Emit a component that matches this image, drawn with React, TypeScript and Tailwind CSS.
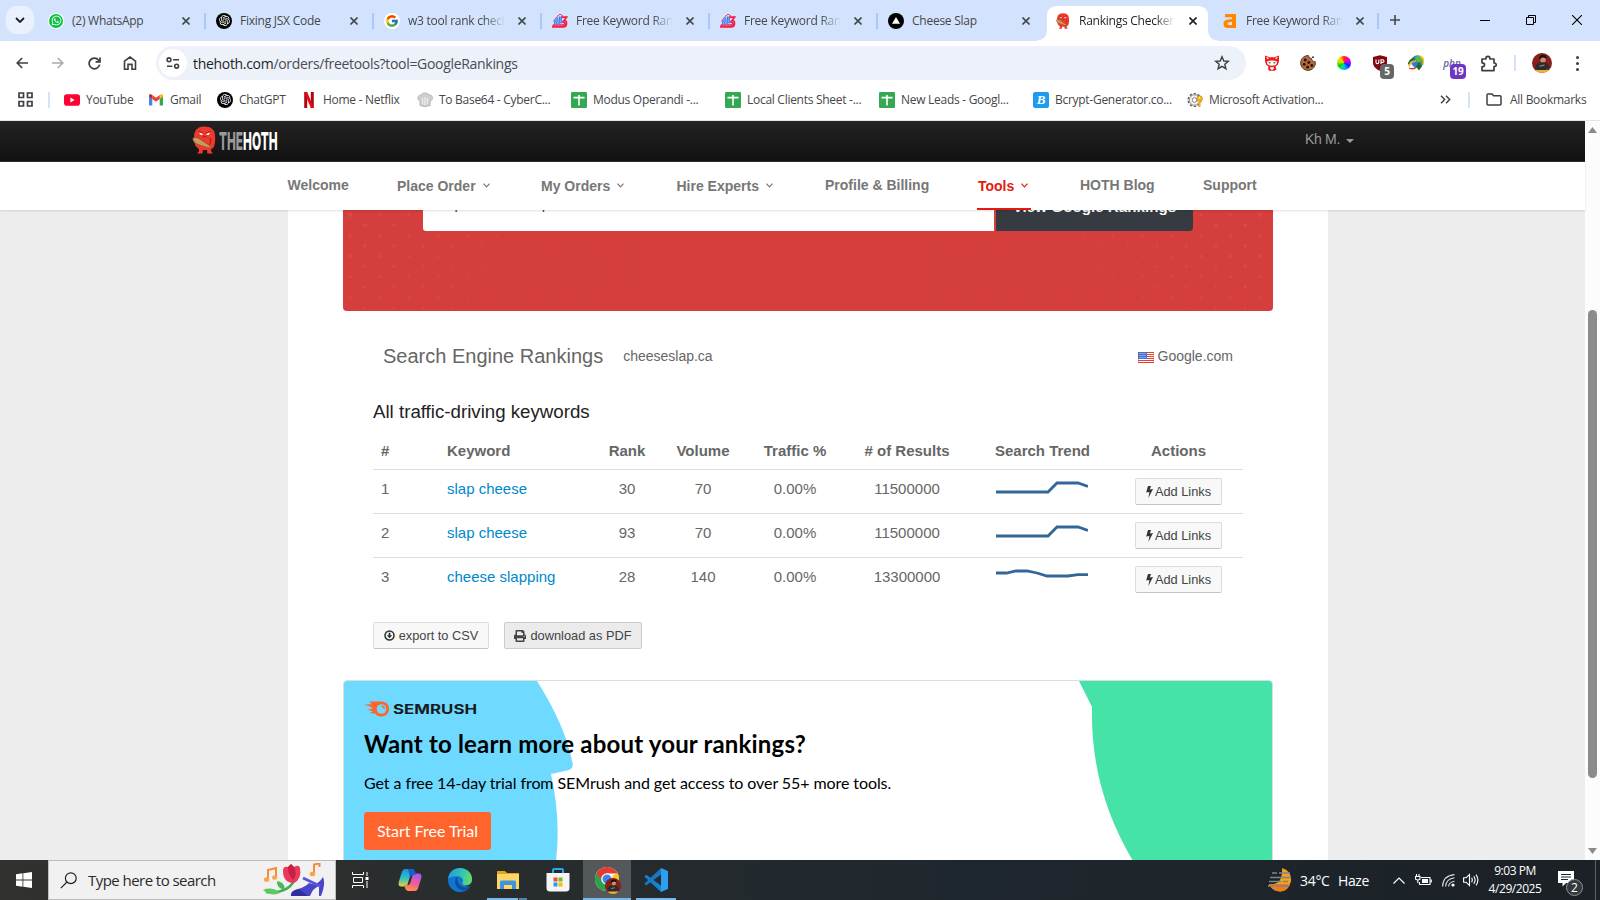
import React from "react";
import { FaWhatsapp, FaPrint } from "react-icons/fa";
import { FcGoogle } from "react-icons/fc";
import { RiOpenaiFill } from "react-icons/ri";

const UI = "font-['Open_Sans','Noto_Sans',sans-serif]";
const ARIAL = "font-['Liberation_Sans',Arial,sans-serif]";

/* ---------- favicons ---------- */

const WhatsAppIcon = () => (
  <span className="flex size-4 items-center justify-center rounded-full bg-white">
    <span className="flex size-[14px] items-center justify-center rounded-full bg-[#0cc143] text-white">
      <FaWhatsapp size={11} />
    </span>
  </span>
);

const OpenAIIcon = () => (
  <span className="flex size-4 items-center justify-center rounded-full bg-black text-white">
    <RiOpenaiFill size={13} />
  </span>
);

const GoogleIcon = () => (
  <span className="flex size-4 items-center justify-center rounded-full bg-white">
    <FcGoogle size={14} />
  </span>
);

const W3Icon = () => (
  <svg viewBox="0 0 16 16" className="size-4">
    <path d="M1.5 8.5L5 3.5L8 1.2L11 3" stroke="#ef2b4a" strokeWidth="0.9" fill="none" />
    <path d="M3.2 6.5L2.8 11M5.4 4.5L4.8 11M7.6 3.5L7 11M9.4 3.5L9 10.5" stroke="#3b7ff0" strokeWidth="1.5" />
    <path d="M9.2 4.2H14.6L12 7.4C15.4 7.6 15.4 13.8 11.5 13.8H0.8L1.6 12H11.6C13.2 12 13.2 9 11 9H9.6" fill="none" stroke="#f0204c" strokeWidth="1.7" />
  </svg>
);

const VercelIcon = () => (
  <svg viewBox="0 0 16 16" className="size-4">
    <circle cx="8" cy="8" r="8" fill="#000" />
    <path d="M8 4L12 10.8H4z" fill="#fff" />
  </svg>
);

const Monster = ({ className }: { className: string }) => (
  <svg viewBox="0 0 24 28" className={className}>
    <path d="M12 0.5C18.5 0.5 22 3.5 22.5 9C23 15 22.5 18.5 21 21.5L18.5 23.5L18.8 25.5L20.5 27.5H14.8L14.6 24H10.4L10 27.5H4.5L6.5 25.5L6.3 23L3 20C1.2 16 1.2 11 1.8 8C3 3 6 0.5 12 0.5z" fill="#ee3a2c" />
    <path d="M6.8 6.2L10.6 7.8Q10.4 9.2 8.6 9Q6.9 8.6 6.8 6.2zM17.4 6.2L13.6 7.8Q13.8 9.2 15.6 9Q17.3 8.6 17.4 6.2z" fill="#fff" />
    <path d="M6 5.4L10.9 7.4M18.2 5.4L13.3 7.4M10 11.2Q12 9.8 14 11.2M17.5 12Q19.5 15 17 18.5" stroke="#8a1a12" strokeWidth="0.9" fill="none" />
    <path d="M0.6 12C2.5 10.6 5.5 11.8 8 13.5L18.5 20.5L18 22C13 21 6 19 3 17.2C0.8 15.5 -0.4 13 0.6 12z" fill="#c99a5f" stroke="#7a4a20" strokeWidth="0.6" />
  </svg>
);

const AhrefsIcon = () => (
  <svg viewBox="0 0 16 16" className="size-4">
    <path d="M3 1H14V15H5.5C2.8 15 1.5 13.4 1.5 11C1.5 7.8 3.5 6.8 6 6.5L10 6V4.3H3zM10 8.8L7 9.2C5.2 9.4 5 11.9 7 11.9H10z" fill="#ff8800" fillRule="evenodd" />
  </svg>
);

const YouTubeIcon = () => (
  <svg viewBox="0 0 16 16" className="size-4">
    <rect x="0" y="2.3" width="16" height="11.4" rx="2.8" fill="#ff0033" />
    <path d="M6.4 5.6L10.6 8L6.4 10.4z" fill="#fff" />
  </svg>
);

const GmailIcon = () => (
  <svg viewBox="0 0 16 16" className="size-4">
    <path d="M1 4V13.5H4.3V6.8z" fill="#4285f4" />
    <path d="M15 4V13.5H11.7V6.8z" fill="#34a853" />
    <path d="M1 4.5V3.6C1 2 3 1.8 4.3 3L4.3 7z" fill="#c5221f" />
    <path d="M15 4.5V3.6C15 2 13 1.8 11.7 3L11.7 7z" fill="#fbbc04" />
    <path d="M4.3 3V7L8 9.8L11.7 7V3L8 5.8z" fill="#ea4335" />
  </svg>
);

const NetflixIcon = () => (
  <svg viewBox="0 0 16 16" className="size-4">
    <path d="M3.2 0H6.2V16L3.2 16z" fill="#b1060f" />
    <path d="M9.8 0H12.8V16H9.8z" fill="#b1060f" />
    <path d="M3.2 0H6.2L12.8 16H9.8z" fill="#e50914" />
  </svg>
);

const ChefIcon = () => (
  <svg viewBox="0 0 16 16" className="size-4">
    <path d="M3 13.5V9C-0.5 7.5 0.5 2.8 3.8 3.2C5 0.3 10.5 0.2 11.8 2.8C16 2.5 16.8 7.8 13.2 9V13.5Q8 15.8 3 13.5z" fill="#cfcfcf" stroke="#a5a5a5" strokeWidth="0.7" />
    <path d="M5.5 6V12M8 5V13M10.5 6V12" stroke="#ededed" strokeWidth="1.2" />
  </svg>
);

const SheetIcon = () => (
  <svg viewBox="0 0 16 16" className="size-4">
    <rect width="16" height="16" rx="1.2" fill="#34a853" />
    <path d="M2.5 5.6H13.5M8 3V13.5" stroke="#fff" strokeWidth="1.6" />
  </svg>
);

const BcryptIcon = () => (
  <span className="flex size-4 items-center justify-center rounded-[2px] bg-[#1d9bf0] font-['Liberation_Serif',serif] text-[13px] leading-none font-bold text-white italic">
    B
  </span>
);

const GearKeyIcon = () => (
  <svg viewBox="0 0 16 16" className="size-4">
    <circle cx="7.5" cy="8" r="6.3" fill="#fff" stroke="#666" strokeWidth="1.6" strokeDasharray="2.4 1.6" />
    <circle cx="7.5" cy="8" r="5.2" fill="#f3f3f3" stroke="#777" strokeWidth="0.8" />
    <circle cx="7.5" cy="8" r="2.3" fill="#fff" stroke="#777" strokeWidth="0.9" />
    <circle cx="12.6" cy="6.6" r="2.9" fill="#f2b01e" stroke="#b97d0b" strokeWidth="0.5" />
    <path d="M11.6 9H13.6V14.5L12.6 15.6L11.6 14.5z" fill="#f2b01e" />
    <circle cx="12.6" cy="5.8" r="0.8" fill="#fff" />
  </svg>
);

const CloseX = ({ dark = false }: { dark?: boolean }) => (
  <svg viewBox="0 0 8 8" className="size-[8px] shrink-0">
    <path d="M0.5 0.5L7.5 7.5M7.5 0.5L0.5 7.5" stroke={dark ? "#1f1f1f" : "#45474a"} strokeWidth="1.6" />
  </svg>
);

/* ---------- tab strip ---------- */

type Tab = { icon: React.ReactNode; title: string; active?: boolean; sep?: boolean; fade?: boolean; narrow?: boolean };

const tabs: Tab[] = [
  { icon: <WhatsAppIcon />, title: "(2) WhatsApp", sep: true },
  { icon: <OpenAIIcon />, title: "Fixing JSX Code", sep: true },
  { icon: <GoogleIcon />, title: "w3 tool rank checker", sep: true, fade: true },
  { icon: <W3Icon />, title: "Free Keyword Rank", sep: true, fade: true },
  { icon: <W3Icon />, title: "Free Keyword Rank", sep: true, fade: true },
  { icon: <VercelIcon />, title: "Cheese Slap", narrow: true },
  { icon: <Monster className="size-4" />, title: "Rankings Checker", active: true, fade: true, narrow: true },
  { icon: <AhrefsIcon />, title: "Free Keyword Rank", sep: true, fade: true, narrow: true },
];

const TabStrip = () => (
  <div className="flex h-[41px] w-full items-start bg-[#d3e3fd]">
    <div className="mt-[6px] ml-[6px] flex size-7 items-center justify-center rounded-[10px] bg-[#e9f0fe]">
      <svg viewBox="0 0 10 6" className="h-[6px] w-[10px]">
        <path d="M1 1L5 5L9 1" stroke="#1f1f1f" strokeWidth="1.8" fill="none" />
      </svg>
    </div>
    <div className="ml-[4px] flex h-full">
      {tabs.map((t, i) => (
        <div key={i} className={"relative flex h-full items-center " + (t.narrow ? "w-[167px]" : "w-[168px]")}>
          {t.active && (
            <svg viewBox="0 0 182 35" className="absolute bottom-0 -left-[8px] h-[35px] w-[182px]">
              <path d="M0 35V34.5Q9 34 10 25V10Q10 0 20 0H161Q171 0 171 10V25Q172 34 181 34.5V35z" fill="#fff" />
            </svg>
          )}
          <div className="relative flex h-10 w-full items-center pl-[10px]">
            <span className="w-4 shrink-0">{t.icon}</span>
            <span
              className={
                "ml-2 w-[97px] overflow-hidden text-[12px] tracking-[-0.25px] whitespace-nowrap " +
                (t.active ? "text-[#1f1f1f] " : "text-[#45474a] ") +
                (t.fade ? "[mask-image:linear-gradient(to_right,#000_76px,transparent_97px)]" : "")
              }
            >
              {t.title}
            </span>
            <span className="ml-[13px]">
              <CloseX dark={t.active} />
            </span>
            <span className={"ml-auto h-4 w-[2px] " + (t.sep ? "bg-[#a8c7fa]" : "")} />
          </div>
        </div>
      ))}
    </div>
    <div className="flex h-10 flex-1 items-center pl-[10px]">
      <svg viewBox="0 0 12 12" className="size-[12px]">
        <path d="M6 1V11M1 6H11" stroke="#45474a" strokeWidth="1.6" />
      </svg>
      <div className="ml-auto flex h-full items-center text-black">
        <div className="flex w-[46px] justify-center">
          <svg viewBox="0 0 10 10" className="size-[10px]"><path d="M0 5.5H10" stroke="#000" /></svg>
        </div>
        <div className="flex w-[46px] justify-center">
          <svg viewBox="0 0 10 10" className="size-[10px]" fill="none" stroke="#000">
            <path d="M0.5 2.5H7.5V9.5H0.5zM2.5 2.5V0.5H9.5V7.5H7.5" />
          </svg>
        </div>
        <div className="flex w-[46px] justify-center">
          <svg viewBox="0 0 10 10" className="size-[10px]"><path d="M0 0L10 10M10 0L0 10" stroke="#000" strokeWidth="1.1" /></svg>
        </div>
      </div>
    </div>
  </div>
);

/* ---------- toolbar ---------- */

const Extensions = () => (
  <>
    <span className="flex w-9 justify-center">
      <svg viewBox="0 0 16 16" className="size-4">
        <path d="M1 0.5L5.5 2.2H10.5L15 0.5V6L14 9.5L11.5 11.5L12.5 14.5L10.5 15.8H5L4 14L4.5 11.5L2 9.5L1 6z" fill="#ee1c1c" />
        <path d="M3 6.5Q8 4.5 13 6.5V8Q12 10.8 8 10.8T3 8z" fill="#fff" />
        <path d="M2.6 2.4L4.4 3.8M13.4 2.4L11.6 3.8" stroke="#fff" strokeWidth="1.2" />
        <path d="M4.6 7.8H6.6M9.4 7.8H11.4" stroke="#333" strokeWidth="1" />
        <path d="M6 12.2H10V13.8H9V14.8H7V13.8H6z" fill="#fff" />
      </svg>
    </span>
    <span className="flex w-9 justify-center">
      <svg viewBox="0 0 16 16" className="size-4">
        <path d="M8.5 0.6C9 3 10.5 3.2 11.5 3.4C11.6 5.5 13 6.4 15.4 6.8C16 11.5 12.5 15.4 8 15.4C3.8 15.4 0.6 12 0.6 8C0.6 3.6 4.4 0.2 8.5 0.6z" fill="#b06a40" stroke="#4a2614" strokeWidth="0.8" />
        <g fill="#2c140b">
          <circle cx="5.2" cy="5" r="1.4" /><circle cx="4.2" cy="9.3" r="1.4" /><circle cx="8.8" cy="7.5" r="1.4" />
          <circle cx="7.6" cy="12.2" r="1.4" /><circle cx="11.8" cy="10.5" r="1.4" /><circle cx="13" cy="2.2" r="0.9" />
        </g>
      </svg>
    </span>
    <span className="flex w-9 justify-center">
      <span className="size-[14px] rounded-full bg-[conic-gradient(#ff2a00,#ff00a8,#b000ff,#0030ff,#00a0ff,#00e0a0,#10d000,#b8e800,#ffd000,#ff2a00)]" />
    </span>
    <span className="relative flex w-9 justify-center">
      <svg viewBox="0 0 16 16" className="size-4">
        <path d="M8 0.3L15 2V7.5C15 11.5 12 14.3 8 15.8C4 14.3 1 11.5 1 7.5V2z" fill="#800610" />
        <path d="M4 4.5V7.2Q4 8.6 5.4 8.6T6.8 7.2V4.5M9 9V4.8H10.6Q12 5 12 6.2T10.6 7.4H9" stroke="#fff" strokeWidth="1.1" fill="none" />
      </svg>
      <span className="absolute top-[9px] left-[18px] flex h-[15px] w-[14px] items-center justify-center rounded-[4px] bg-[#666] text-[10px] font-bold text-white">5</span>
    </span>
    <span className="flex w-9 justify-center">
      <svg viewBox="0 0 16 16" className="size-4">
        <circle cx="9.4" cy="6.6" r="6.3" fill="#2d7fd6" />
        <path d="M7 2.5Q9 0 12 1L14.5 4L12.5 9L9 7z" fill="#5fb83a" />
        <path d="M12.4 0.9Q17 4 14.8 9.5" stroke="#f2c81e" strokeWidth="1.8" fill="none" />
        <path d="M0.5 9.5Q2 4 6.5 3.6" stroke="#1c6c2c" strokeWidth="1.8" fill="none" />
        <path d="M0.8 11.4Q2.5 6.6 8 6" stroke="#f0b51c" strokeWidth="1.5" fill="none" />
        <path d="M1 13Q4 14.6 8 12.6" stroke="#d8351f" strokeWidth="1.4" fill="none" />
        <path d="M9.5 7.5V10.5H7.5L11 15.5L14.5 10.5H12.5V7.5z" fill="#1d6a22" />
      </svg>
    </span>
    <span className="relative flex w-9 justify-center">
      <span className="text-[10px] leading-4 font-semibold text-[#5c679c] italic">php</span>
      <span className="absolute top-[9px] left-[16px] flex h-[15px] w-4 items-center justify-center rounded-[4px] bg-[#6c35c2] text-[10px] font-bold tracking-tight text-white">19</span>
    </span>
    <span className="flex w-9 justify-center">
      <svg viewBox="0 0 17 17" className="size-[17px]">
        <path d="M2 4H5.8C5.8 0.6 10 0.6 10 4H14V8C17 8 17 11.6 14 11.6V15.6H2V11.8C5.4 11.8 5.4 7.8 2 7.8z" fill="none" stroke="#3c3f43" strokeWidth="1.7" strokeLinejoin="round" />
      </svg>
    </span>
  </>
);

const Avatar = ({ className }: { className: string }) => (
  <svg viewBox="0 0 20 20" className={className}>
    <defs><clipPath id="av"><circle cx="10" cy="10" r="10" /></clipPath></defs>
    <g clipPath="url(#av)">
      <rect width="20" height="20" fill="#8a1f1a" />
      <path d="M1 18Q10 14 19 18L14 20H6z" fill="#e8b52c" />
      <path d="M3 16Q3 9.5 9.5 9.2Q16.5 9 17.5 14.5L14 17H6z" fill="#2a2c33" />
      <circle cx="11" cy="6.4" r="2.9" fill="#c98f74" />
      <path d="M7 5.6Q7.4 1.6 11.4 1.8Q15 2 14.4 6Q12.5 4 10.5 4.6Q8.5 4.8 8 7z" fill="#18110f" />
      <path d="M7.5 13.2L12.5 12.2" stroke="#a87863" strokeWidth="1.2" />
    </g>
  </svg>
);

const Toolbar = () => (
  <div className="flex h-[44px] items-center bg-white">
    <div className="flex w-[156px] items-center pl-1 text-[#45474a]">
      <span className="flex w-9 justify-center">
        <svg viewBox="0 0 12 12" className="size-[12px]" fill="none" stroke="#3c3f43" strokeWidth="1.6"><path d="M12 6H1.5M6.2 1L1.2 6L6.2 11" /></svg>
      </span>
      <span className="flex w-9 justify-center">
        <svg viewBox="0 0 12 12" className="size-[12px]" fill="none" stroke="#a9abae" strokeWidth="1.6"><path d="M0 6H10.5M5.8 1L10.8 6L5.8 11" /></svg>
      </span>
      <span className="flex w-9 justify-center">
        <svg viewBox="0 0 13 13" className="size-[13px]" fill="none" stroke="#3c3f43" strokeWidth="1.7"><path d="M11.6 7.6A5.3 5.3 0 1 1 10.6 3.2L11.6 4.4M12 0.5V4.9H7.6" /></svg>
      </span>
      <span className="flex w-9 justify-center">
        <svg viewBox="0 0 14 14" className="size-[14px]" fill="none" stroke="#3c3f43" strokeWidth="1.6"><path d="M1.5 5.2L7 1L12.5 5.2V13.2H9V8.4H5V13.2H1.5z" /></svg>
      </span>
    </div>
    <div className="flex h-[34px] w-[1090px] items-center rounded-full bg-[#edf1fa] px-[3px]">
      <span className="flex size-7 items-center justify-center rounded-full bg-white">
        <svg viewBox="0 0 14 12" className="h-[12px] w-[14px]" fill="none" stroke="#3c3f43" strokeWidth="1.6">
          <circle cx="3" cy="2.8" r="1.9" /><path d="M7 2.8H13M1 9.2H6.4" /><circle cx="10.6" cy="9.2" r="1.9" />
        </svg>
      </span>
      <span className="ml-[6px] text-[14px] tracking-[-0.31px] whitespace-nowrap text-[#4a4c50]">
        <span className="text-[#1f1f1f]">thehoth.com</span>/orders/freetools?tool=GoogleRankings
      </span>
      <svg viewBox="0 0 16 16" className="mr-[13px] ml-auto size-4" fill="none" stroke="#3c3f43" strokeWidth="1.4">
        <path d="M8 1.8L9.8 6L14.3 6.3L10.8 9.2L11.9 13.7L8 11.3L4.1 13.7L5.2 9.2L1.7 6.3L6.2 6z" />
      </svg>
    </div>
    <div className="ml-2 flex items-center">
      <Extensions />
    </div>
    <span className="ml-[8px] h-4 w-[2px] bg-[#d3e3fd]" />
    <Avatar className="ml-[16px] size-5" />
    <span className="ml-[24px] flex flex-col gap-[3px]">
      <i className="size-[3px] rounded-full bg-[#3c3f43]" />
      <i className="size-[3px] rounded-full bg-[#3c3f43]" />
      <i className="size-[3px] rounded-full bg-[#3c3f43]" />
    </span>
  </div>
);

/* ---------- bookmarks ---------- */

const Bookmark = ({ icon, label, className }: { icon: React.ReactNode; label: string; className: string }) => (
  <span className={"flex shrink-0 items-center gap-[6px] whitespace-nowrap " + className}>
    <span className="w-4 shrink-0">{icon}</span>
    <span>{label}</span>
  </span>
);

const Bookmarks = () => (
  <div className="flex h-[36px] items-center border-b border-[#dfe8e2] bg-white pb-[6px] pl-[18px] text-[12px] tracking-[-0.28px] text-[#45474a]">
    <svg viewBox="0 0 15 15" className="size-[15px]" fill="none" stroke="#3c3f43" strokeWidth="1.7">
      <path d="M1 1H5.5V5.5H1zM9.5 1H14V5.5H9.5zM1 9.5H5.5V14H1zM9.5 9.5H14V14H9.5z" />
    </svg>
    <span className="mr-[14px] ml-[15px] h-4 w-[2px] bg-[#d3e3fd]" />
    <Bookmark icon={<YouTubeIcon />} label="YouTube" className="w-[84px]" />
    <Bookmark icon={<GmailIcon />} label="Gmail" className="w-[69px]" />
    <Bookmark icon={<OpenAIIcon />} label="ChatGPT" className="w-[84px]" />
    <Bookmark icon={<NetflixIcon />} label="Home - Netflix" className="w-[116px]" />
    <Bookmark icon={<ChefIcon />} label="To Base64 - CyberC..." className="w-[154px]" />
    <Bookmark icon={<SheetIcon />} label="Modus Operandi -..." className="w-[154px]" />
    <Bookmark icon={<SheetIcon />} label="Local Clients Sheet -..." className="w-[154px]" />
    <Bookmark icon={<SheetIcon />} label="New Leads - Googl..." className="w-[154px]" />
    <Bookmark icon={<BcryptIcon />} label="Bcrypt-Generator.co..." className="w-[154px]" />
    <Bookmark icon={<GearKeyIcon />} label="Microsoft Activation..." className="w-[253px]" />
    <svg viewBox="0 0 11 9" className="h-[9px] w-[11px]" fill="none" stroke="#3c3f43" strokeWidth="1.4">
      <path d="M1 0.8L4.7 4.5L1 8.2M6 0.8L9.7 4.5L6 8.2" />
    </svg>
    <span className="mr-[16px] ml-[17px] h-4 w-[2px] bg-[#d3e3fd]" />
    <svg viewBox="0 0 16 13" className="h-[13px] w-[16px]" fill="none" stroke="#3c3f43" strokeWidth="1.5">
      <path d="M1 2Q1 1 2 1H6L7.6 2.8H14Q15 2.8 15 3.8V11Q15 12 14 12H2Q1 12 1 11z" />
    </svg>
    <span className="ml-2 whitespace-nowrap">All Bookmarks</span>
  </div>
);

/* ---------- site ---------- */

const NavItem = ({ label, chevron, active, className }: { label: string; chevron?: boolean; active?: boolean; className: string }) => (
  <div className={"shrink-0 " + className}>
    <span
      className={
        "inline-flex h-[48px] items-center whitespace-nowrap " +
        (active ? "border-b-2 border-[#e5190f] pt-[3px] pl-px text-[#e5190f]" : chevron ? "pt-[1px] text-[#777]" : "pb-[1px] text-[#777]")
      }
    >
      {label}
      {chevron && (
        <svg viewBox="0 0 7 5" className="mr-[3px] mb-[2px] ml-[7px] h-[5px] w-[7px]" fill="none" stroke="currentColor" strokeWidth="1.2">
          <path d="M0.5 0.6L3.5 3.8L6.5 0.6" />
        </svg>
      )}
    </span>
  </div>
);

const SiteHeader = () => (
  <>
    <div className="flex h-[41px] items-center border-b border-[#2c2c2c] bg-gradient-to-b from-[#232323] to-[#111] pl-[192px]">
      <Monster className="mb-[2px] h-[28px] w-[25px]" />
      <svg viewBox="0 0 60 24" className="ml-[1px] h-6 w-[60px] font-['Inter',sans-serif]" fontWeight="800" fontSize="25">
        <text x="1" y="20.5" textLength="58.5" lengthAdjust="spacingAndGlyphs" fill="#fff">
          <tspan fill="#9a9a9a">THE</tspan>
          <tspan>HOTH</tspan>
        </text>
      </svg>
      <span className="ml-[1027px] flex items-center pb-1 text-[14px] tracking-[-0.3px] text-[#999]">
        Kh M.
        <svg viewBox="0 0 8 4" className="mt-[4px] ml-[6px] h-1 w-2"><path d="M0 0H8L4 4z" fill="#999" /></svg>
      </span>
    </div>
    <div className="relative z-10 flex h-[48px] bg-white pl-[287.5px] text-[14px] font-bold shadow-[0_1px_2px_rgba(0,0,0,0.12)]">
      <NavItem label="Welcome" className="w-[109.5px]" />
      <NavItem label="Place Order" chevron className="w-[144px]" />
      <NavItem label="My Orders" chevron className="w-[135.5px]" />
      <NavItem label="Hire Experts" chevron className="w-[148.5px]" />
      <NavItem label="Profile & Billing" className="w-[152px]" />
      <NavItem label="Tools" chevron active className="w-[103px]" />
      <NavItem label="HOTH Blog" className="w-[123px]" />
      <NavItem label="Support" className="w-[80px]" />
    </div>
  </>
);

const dotColumns = (from: number, to: number) => {
  const dots: { x: number; y: number; r: number; o: number }[] = [];
  for (let row = 0; row < 11; row++) {
    for (let x = 7 + (row % 2) * 14.7; x < 930; x += 29.35) {
      if (x < from || x > to) continue;
      const edge = from === 0 ? 1 - x / to : (x - from) / (930 - from);
      dots.push({ x, y: 5 + row * 10.3, r: 0.8 + edge * 1.4 * (1 - row / 14), o: 0.12 + edge * 0.25 });
    }
  }
  return dots;
};

const SearchBanner = () => (
  <div className="relative h-[101px] w-[930px] overflow-hidden rounded-b-[4px] bg-[#d43f3d]">
    <svg viewBox="0 0 930 101" className="absolute inset-0 h-[101px] w-[930px]">
      {[...dotColumns(0, 300), ...dotColumns(585, 930)].map((d, i) => (
        <circle key={i} cx={d.x} cy={d.y} r={d.r} fill="#e0604a" opacity={d.o} />
      ))}
    </svg>
    <div className="relative -mt-[29px] ml-[80px] flex h-[50px] gap-[2px]">
      <div className="flex w-[571px] items-center rounded-l-[3px] bg-white pb-[3px] pl-[15px] text-[14.8px] text-[#444]">
        http://cheeseslap.ca
      </div>
      <div className="flex w-[197px] items-center justify-center rounded-r-[4px] bg-[#363b42] pt-[3px] text-[15.2px] font-bold text-white">
        View Google Rankings
      </div>
    </div>
  </div>
);

const FlagUS = () => (
  <svg viewBox="0 0 16 11" className="h-[11px] w-[16px]">
    <rect width="16" height="11" fill="#fff" />
    <path d="M0 0.5H16M0 2.5H16M0 4.5H16M0 6.5H16M0 8.5H16M0 10.5H16" stroke="#ee3b33" />
    <rect width="9" height="7" fill="#3f6fe0" />
    <path d="M1.5 1.5H8M1.5 3.5H8M1.5 5.5H8" stroke="#cfdcfb" strokeWidth="0.9" strokeDasharray="1 1" />
    <rect x="0.5" y="0.5" width="15" height="10" fill="none" stroke="#a0522d" strokeOpacity="0.35" />
  </svg>
);

const RISE = "0,14 52,14 61,5 82,5 92,8.5";
const WAVE = "0,7 10.5,7 20,5 31,5 41,7 51,10 72,10 82,8.7 92,8.7";

const rows = [
  { n: 1, kw: "slap cheese", rank: 30, vol: 70, res: "11500000", trend: RISE },
  { n: 2, kw: "slap cheese", rank: 93, vol: 70, res: "11500000", trend: RISE },
  { n: 3, kw: "cheese slapping", rank: 28, vol: 140, res: "13300000", trend: WAVE },
];

const BTN = "flex h-[27px] items-center justify-center rounded-[2px] border border-[#dcdcdc] border-b-[#c4c4c4] text-[12.8px] whitespace-nowrap text-[#444]";
const GRID = "grid grid-cols-[66px_161px_54px_98px_86px_138px_138px_129px]";

const KeywordTable = () => (
  <div className="w-[870px] text-[15px] text-[#666]">
    <div className={GRID + " h-[38px] items-center border-b border-[#ddd] pt-[2px] text-center font-bold"}>
      <span className="pl-2 text-left">#</span>
      <span className="pl-2 text-left">Keyword</span>
      <span>Rank</span>
      <span>Volume</span>
      <span>Traffic %</span>
      <span>{"# of Results"}</span>
      <span className="pr-[5px]">Search Trend</span>
      <span>Actions</span>
    </div>
    {rows.map((r) => (
      <div key={r.n} className={GRID + " h-[44px] border-b border-[#ddd] pt-[8px] text-center leading-[22px] last:border-b-0"}>
        <span className="pl-2 text-left">{r.n}</span>
        <span className="pl-2 text-left text-[#0088cc]">{r.kw}</span>
        <span>{r.rank}</span>
        <span>{r.vol}</span>
        <span>0.00%</span>
        <span>{r.res}</span>
        <span className="pl-[20px]">
          <svg viewBox="0 0 92 20" className="h-5 w-[92px]">
            <polyline points={r.trend} fill="none" stroke="#336699" strokeWidth="2.8" />
          </svg>
        </span>
        <span className="flex justify-center">
          <span className={BTN + " w-[87px] bg-[#f8f8f8]"}>
            <svg viewBox="0 0 7 12" className="mr-[2px] h-[12px] w-[7px]">
              <path d="M2 0H5L3.8 3.6L7 2.9L2.4 12L3.4 5.9L0.2 6.6z" fill="#333" />
            </svg>
            Add Links
          </span>
        </span>
      </div>
    ))}
  </div>
);

const SemrushBanner = () => (
  <div className="relative h-[230px] w-[930px] overflow-hidden rounded-[4px] border border-[#ddd] bg-white font-['Lato',sans-serif] text-black">
    <svg viewBox="0 0 928 180" className="absolute top-0 left-0 h-[180px] w-[928px]">
      <path d="M0 0H193Q221 44 228.500 82Q230 88 223 89.500L207 93Q217 138 212 180H0z" fill="#6edaff" />
      <path d="M735 0L748 26Q746 108 789 180H928V0z" fill="#46e3a9" />
    </svg>
    <div className="relative pl-[20px]">
      <svg viewBox="0 0 114 16" className="mt-[20px] block h-4 w-[114px]">
        <path d="M5 0.5H17C23 0.5 25 4.5 25 8C25 12.5 21.5 15.5 17.5 15.5C14 15.5 12 14 11 12.5L5.5 12L9 10.6L3.5 8.4L8.5 8L6.5 5.5L0 3.6L8 3.2z" fill="#ff642d" />
        <circle cx="17.5" cy="8" r="4.8" fill="#6edaff" />
        <path d="M17.5 5.2A2.8 2.8 0 0 1 20.3 8" stroke="#ff642d" strokeWidth="1.3" fill="none" />
        <text x="29" y="13" fontSize="13" fontWeight="700" textLength="84" lengthAdjust="spacingAndGlyphs" fill="#171a22" className="font-['Inter',sans-serif]">SEMRUSH</text>
      </svg>
      <h2 className="mt-[13px] text-[24px] leading-[28px] font-bold tracking-[0.18px] whitespace-nowrap">
        Want to learn more about your rankings?
      </h2>
      <p className="mt-[14px] text-[16px] leading-[22px] tracking-[-0.08px] whitespace-nowrap">
        Get a free 14-day trial from SEMrush and get access to over 55+ more tools.
      </p>
      <span className="mt-[18px] flex h-[38px] w-[127px] items-center justify-center rounded-[3px] bg-[#ff642d] pb-px text-[16px] text-white">
        Start Free Trial
      </span>
    </div>
  </div>
);

const Page = () => (
  <div className="h-[650px] overflow-hidden bg-[#ededed]">
    <div className="ml-[288px] h-full w-[1040px] bg-white pl-[55px]">
      <SearchBanner />
      <div className="mt-[30px] flex h-[30px] w-[930px] items-center pr-[40px] pl-[40px] text-[#666]">
        <span className="text-[20px]">Search Engine Rankings</span>
        <span className="ml-[20px] text-[14px]">cheeseslap.ca</span>
        <span className="ml-auto flex items-center gap-1 text-[14px]">
          <span className="pt-[2px]"><FlagUS /></span>
          Google.com
        </span>
      </div>
      <div className="pl-[30px]">
        <h3 className="mt-[27px] text-[18.7px] leading-[28px] text-[#222]">All traffic-driving keywords</h3>
        <div className="mt-[6px]">
          <KeywordTable />
        </div>
        <div className="mt-[20px] flex gap-[15px]">
          <span className={BTN + " w-[116px] gap-[4px] bg-[#f8f8f8]"}>
            <svg viewBox="0 0 12 12" className="size-[11px]">
              <circle cx="6" cy="6" r="4.9" fill="none" stroke="#333" strokeWidth="1.7" />
              <path d="M5 3H7V5.8H9L6 9L3 5.8H5z" fill="#333" />
            </svg>
            export to CSV
          </span>
          <span className={BTN + " w-[138px] gap-[4px] !border-[#ccc] bg-[#ebebeb]"}>
            <FaPrint size={12} />
            download as PDF
          </span>
        </div>
      </div>
      <div className="mt-[31px]">
        <SemrushBanner />
      </div>
    </div>
  </div>
);

const Scrollbar = () => (
  <div className="flex w-[15px] flex-col items-center bg-[#fcfcfc]">
    <svg viewBox="0 0 9 6" className="mt-[6px] h-[6px] w-[9px]"><path d="M4.5 0L9 6H0z" fill="#8b8b8b" /></svg>
    <span className="mt-[177px] h-[468px] w-[9px] rounded-full bg-[#8b8b8b]" />
    <svg viewBox="0 0 9 6" className="mt-auto mb-[6px] h-[6px] w-[9px]"><path d="M0 0H9L4.5 6z" fill="#8b8b8b" /></svg>
  </div>
);

/* ---------- taskbar ---------- */

const SearchArt = () => (
  <svg viewBox="0 0 62 34" className="h-[34px] w-[62px]">
    <path d="M5 16V7L13 5V14" stroke="#f58c3c" strokeWidth="2" fill="none" />
    <ellipse cx="3.6" cy="16.5" rx="2.8" ry="2.3" fill="#f7a54e" /><ellipse cx="11.6" cy="14.5" rx="2.6" ry="2.2" fill="#f7a54e" />
    <path d="M51 11V1.5L56.5 0.5V4" stroke="#f58c3c" strokeWidth="2" fill="none" />
    <ellipse cx="49.5" cy="11" rx="2.8" ry="2.3" fill="#f7a54e" />
    <path d="M31 18Q24 31 3 29" stroke="#3fae4e" strokeWidth="2.6" fill="none" />
    <path d="M0 27Q9 23 17 30Q9 34 0 27z" fill="#5cc763" />
    <path d="M22 27Q13 25 14 18Q22 19 22 27z" fill="#4bb858" />
    <path d="M20 8Q20 3 25 4L28 1L31 4Q36 1 37 5Q39 16 31 20Q20 20 20 8z" fill="#ea3a5c" />
    <path d="M25 4Q25 12 30 17Q35 11 31 4L28 1z" fill="#c81f47" />
    <path d="M28 33Q27 28 35 26Q42 24 46 20Q54 24 60 14Q63 20 58 33H56V23Q50 25 47 33z" fill="#4a45c4" />
    <path d="M36 26L45 33H28Q27 28 36 26z" fill="#322f9c" />
    <path d="M40 15L57 23" stroke="#5a55d8" strokeWidth="2.5" />
  </svg>
);

const Taskbar = () => (
  <div className="flex h-[40px] items-stretch bg-gradient-to-r from-[#31322d] via-[#1f272e] via-60% to-[#1b2126] text-white">
    <div className="flex w-12 items-center justify-center">
      <svg viewBox="0 0 16 16" className="size-4" fill="#fff">
        <path d="M0 2.2L6.5 1.3V7.6H0zM7.3 1.2L16 0V7.6H7.3zM0 8.4H6.5V14.7L0 13.8zM7.3 8.4H16V16L7.3 14.8z" />
      </svg>
    </div>
    <div className="flex w-[288px] items-center border border-[#bdbdbd] bg-[#f1f1f1] pl-[11px] text-[#2b2b2b]">
      <svg viewBox="0 0 17 17" className="size-[17px]" fill="none" stroke="#222" strokeWidth="1.2"><circle cx="10.8" cy="6.2" r="5.4" /><path d="M7 10L0.8 16.2" /></svg>
      <span className="ml-[11px] w-[175px] text-[15px] tracking-[-0.55px] whitespace-nowrap">Type here to search</span>
      <SearchArt />
    </div>
    <div className="flex w-[48px] items-center justify-center">
      <svg viewBox="0 0 17 16" className="h-4 w-[17px]" fill="none" stroke="#fff">
        <path d="M0.5 0V2.5H11.5V0M0.5 16V13.5H11.5V16M1.5 5.5H10.5V10.5H1.5zM15 0V4M15 9V16" /><rect x="13.5" y="5" width="3" height="3" fill="#fff" stroke="none" />
      </svg>
    </div>
    <div className="flex w-[52px] items-center justify-center">
      <svg viewBox="0 0 24 24" className="size-6">
        <defs>
          <linearGradient id="cp1" x1="0" y1="0" x2="0" y2="1"><stop offset="0" stopColor="#1b8fe8" /><stop offset="0.55" stopColor="#35c3c0" /><stop offset="1" stopColor="#e8d336" /></linearGradient>
          <linearGradient id="cp2" x1="0.6" y1="0" x2="0.3" y2="1"><stop offset="0" stopColor="#a05cf0" /><stop offset="0.5" stopColor="#ee5a9c" /><stop offset="1" stopColor="#ff9440" /></linearGradient>
        </defs>
        <path d="M7 1H14Q16 1 17 4L17.6 7H14Q12.5 7 11.8 9L9.5 16.5Q9 18.5 6 18.5H3Q-0.5 18.5 1 13L4 3.500Q5 1 7 1z" fill="url(#cp1)" />
        <path d="M17 23H10Q8 23 7 20L6.4 17H10Q11.5 17 12.2 15L14.5 7.5Q15 5.5 18 5.5H21Q24.5 5.5 23 11L20 20.5Q19 23 17 23z" fill="url(#cp2)" />
        <path d="M10 1H14Q16 1 17 4L17.6 7H14Q12.4 7 11.8 9z" fill="#1560d8" />
      </svg>
    </div>
    <div className="flex w-[47px] items-center justify-center">
      <svg viewBox="0 0 24 24" className="size-6">
        <defs>
          <linearGradient id="e1" x1="0" y1="0.3" x2="1" y2="0.5"><stop offset="0" stopColor="#1e9fe0" /><stop offset="0.6" stopColor="#35c6b0" /><stop offset="1" stopColor="#66e05a" /></linearGradient>
        </defs>
        <circle cx="12" cy="12" r="12" fill="#1276cf" />
        <path d="M0.2 10.5C1 4 6 0 12 0C19 0 24 5 24 11C24 15 21 17.5 17.5 17.5C15 17.5 13.4 16.3 14.2 15.2C16.2 12.5 14.5 8.5 9.8 8.3C5 8 1 9.5 0.2 10.5z" fill="url(#e1)" />
        <path d="M9.5 8.4C6 10.5 6 19 13 22C17 23.3 20.5 21 22 18.8C15 21 8.5 17 9.5 8.4z" fill="#0c4f9e" />
        <path d="M24 13.5Q23 17.5 17.5 17.5Q13.4 17 14.2 15.2Q14.6 18 22 18.8Q23.8 16.5 24 13.5z" fill="#2a3135" />
      </svg>
    </div>
    <div className="relative flex w-[50px] items-center justify-center">
      <svg viewBox="0 0 24 20" className="mb-px h-5 w-6">
        <path d="M1 1H9L11 3H23V19H1z" fill="#e8a317" />
        <rect x="1" y="4" width="22" height="15" fill="#fcd668" />
        <path d="M4 19V12Q4 10.5 5.5 10.5H18.5Q20 10.5 20 12V19H16V15H8V19z" fill="#3d94d9" />
      </svg>
      <span className="absolute bottom-0 left-[4px] h-[2px] w-[31px] bg-[#76b9ed]" />
      <span className="absolute bottom-0 left-[36px] h-[2px] w-[8px] bg-[#5584a8]" />
    </div>
    <div className="flex w-[48px] items-center justify-center pl-px">
      <svg viewBox="0 0 24 24" className="size-6">
        <path d="M7 6V2.2Q7 1 8.2 1H15.8Q17 1 17 2.2V6" fill="none" stroke="#29a9e8" strokeWidth="2" />
        <path d="M0.5 5H23.5V20Q23.5 23.5 20 23.5H4Q0.5 23.5 0.5 20z" fill="#f5f5f5" />
        <path d="M7.5 9.5H11.5V13.5H7.5z" fill="#f05125" /><path d="M12.5 9.5H16.5V13.5H12.5z" fill="#7db929" />
        <path d="M7.5 14.5H11.5V18.5H7.5z" fill="#1ba1e8" /><path d="M12.5 14.5H16.5V18.5H12.5z" fill="#fcb913" />
      </svg>
    </div>
    <div className="relative ml-[2px] flex w-[48px] items-center justify-center border-b-2 border-[#76b9ed] bg-[#54585a]">
      <svg viewBox="0 0 24 24" className="size-6">
        <circle cx="12" cy="12" r="12" fill="#fff" />
        <path d="M12 12L22.4 6A12 12 0 0 1 12 24z" fill="#fcc31e" />
        <path d="M12 12V24A12 12 0 0 1 1.6 6z" fill="#2aa24c" />
        <path d="M12 6.5H22.6L22.4 6A12 12 0 0 0 1.6 6L7 14z" fill="#e33b2e" />
        <circle cx="12" cy="12" r="5.8" fill="#fff" /><circle cx="12" cy="12" r="4.5" fill="#3f83f0" />
      </svg>
      <Avatar className="absolute top-[18px] left-[22px] size-4" />
    </div>
    <div className="relative ml-[1px] flex w-[48px] items-center justify-center">
      <svg viewBox="0 0 24 24" className="size-6">
        <path d="M17 0L24 3V21L17 24z" fill="#2aa0ee" />
        <path d="M2.2 6.8L0.3 8.4L14.5 21.8L17 24V17.5z" fill="#1482cf" />
        <path d="M17 0V6.5L2.2 17.6L0.3 15.8z" fill="#1a77c2" />
      </svg>
      <span className="absolute bottom-0 left-[4px] h-[2px] w-[40px] bg-[#76b9ed]" />
    </div>
    <div className="ml-auto flex items-center">
      <svg viewBox="0 0 24 24" className="size-6">
        <path d="M14 0Q24 3 23 13Q21 23 12 23.5Q4 23 1 16Q15 18 14 0z" fill="#f5a11f" />
        <path d="M1 16H22Q19 23.5 12 23.5Q4 23 1 16z" fill="#ee7a1c" />
        <path d="M4 5H9M11 5H22M2 9.5H23M1 13.5H13M15 13.5H20M0 17.8H6M8 17.8H20" stroke="#7c858c" strokeWidth="1.7" />
      </svg>
      <span className="ml-[8px] w-[38px] text-[14px] tracking-[-0.3px]">34°C</span>
      <span className="w-[55px] text-[14px] tracking-[-0.4px]">Haze</span>
      <svg viewBox="0 0 12 7" className="h-[7px] w-3" fill="none" stroke="#fff" strokeWidth="1.2"><path d="M0.5 6.5L6 1L11.5 6.5" /></svg>
      <svg viewBox="0 0 17 12" className="mb-px ml-[10px] h-3 w-[17px]" fill="none" stroke="#fff" strokeWidth="1.1">
        <path d="M6 3.5H15V10.5H4.5V8M16.3 5.5V8.5M1.5 0V2.5M4 0V2.5M0.5 2.5H5V5Q2.8 7 0.5 5zM2.8 6.5V9" /><rect x="7" y="5" width="6" height="4" fill="#fff" stroke="none" />
      </svg>
      <svg viewBox="0 0 13 13" className="ml-[10px] size-[13px]" fill="none" stroke="#ddd" strokeWidth="1.1">
        <path d="M0.6 12.5Q1 1.5 12.5 0.6M3.6 12.5Q4 5 12.5 3.8M6.6 12.5Q7 8 12.5 7.2" /><circle cx="11" cy="11" r="1.6" fill="#fff" stroke="none" />
      </svg>
      <svg viewBox="0 0 17 14" className="ml-[8px] h-[14px] w-[17px]" fill="none" stroke="#fff" strokeWidth="1.1">
        <path d="M0.6 4.8H3L6.5 1.5V12.5L3 9.2H0.6zM8.6 4.8Q10 7 8.6 9.2M10.8 3.2Q13.4 7 10.8 10.8M13 1.6Q16.8 7 13 12.4" />
      </svg>
      <div className="ml-[5px] flex w-[60px] flex-col items-center text-[12px] leading-[18px] tracking-[-0.45px] whitespace-nowrap">
        <span>9:03 PM</span>
        <span>4/29/2025</span>
      </div>
      <div className="relative ml-[13px] h-[28px] w-[37px]">
        <svg viewBox="0 0 16 16" className="mt-[5px] size-4"><path d="M0 0H16V12H8L4.5 15.5V12H0z" fill="#fff" /><path d="M3 3.5H13M3 6H13M3 8.5H10" stroke="#20262b" strokeWidth="1.1" /></svg>
        <span className="absolute top-[13px] left-[8px] flex size-[17px] items-center justify-center rounded-full border border-[#8b9094] bg-[#33393d] text-[12px]">2</span>
      </div>
      <span className="mr-[4px] h-full w-px bg-[#5d6367]" />
    </div>
  </div>
);

export default function App() {
  return (
    <div className={"flex h-[900px] w-[1600px] flex-col overflow-hidden bg-white " + UI}>
      <TabStrip />
      <Toolbar />
      <Bookmarks />
      <div className={"flex h-[739px] " + ARIAL}>
        <div className="w-[1585px]">
          <SiteHeader />
          <Page />
        </div>
        <Scrollbar />
      </div>
      <Taskbar />
    </div>
  );
}
